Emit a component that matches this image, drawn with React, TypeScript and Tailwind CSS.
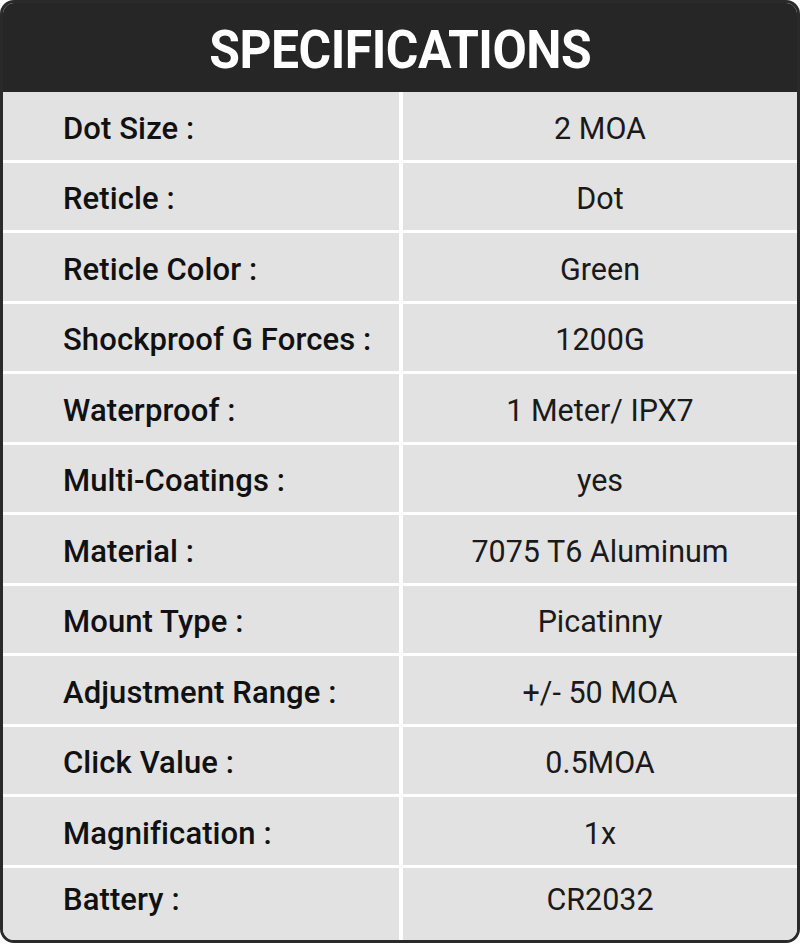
import React from "react";

const rows: [string, string][] = [
  ["Dot Size :", "2 MOA"],
  ["Reticle :", "Dot"],
  ["Reticle Color :", "Green"],
  ["Shockproof G Forces :", "1200G"],
  ["Waterproof :", "1 Meter/ IPX7"],
  ["Multi-Coatings :", "yes"],
  ["Material :", "7075 T6 Aluminum"],
  ["Mount Type :", "Picatinny"],
  ["Adjustment Range :", "+/- 50 MOA"],
  ["Click Value :", "0.5MOA"],
  ["Magnification :", "1x"],
  ["Battery :", "CR2032"],
];

export default function App() {
  return (
    <div className="w-[800px] h-[945px] bg-white" style={{ fontFamily: "Roboto, 'Noto Sans', sans-serif" }}>
      <div className="w-[800px] h-[943px] rounded-[14px] border-[3px] border-[#2a2a2a] bg-white overflow-hidden flex flex-col">
        <div className="h-[89px] shrink-0 bg-[#262626] flex items-center justify-center">
          <h1 className="text-white font-bold text-[53px] leading-none tracking-[-0.5px] scale-x-[0.94] pt-[6px]">
            SPECIFICATIONS
          </h1>
        </div>
        <div className="flex-1 flex flex-col gap-[3px]">
          {rows.map(([k, v], i) => {
            const last = i === rows.length - 1;
            return (
              <div key={k} className={last ? "flex-1 flex gap-[4px]" : "h-[67.5px] shrink-0 flex gap-[4px]"}>
                <div
                  className={
                    "w-[396px] bg-[#e2e2e2] flex items-center pl-[60px] text-[31px] font-medium text-[#111111] tracking-[0.1px] " +
                    (last ? "pb-[8px]" : "pt-[6px]")
                  }
                >
                  {k}
                </div>
                <div
                  className={
                    "flex-1 bg-[#e2e2e2] flex items-center justify-center text-[30.5px] text-[#1a1a1a] " +
                    (last ? "pb-[8px]" : "pt-[6px]")
                  }
                >
                  {v}
                </div>
              </div>
            );
          })}
        </div>
      </div>
    </div>
  );
}
